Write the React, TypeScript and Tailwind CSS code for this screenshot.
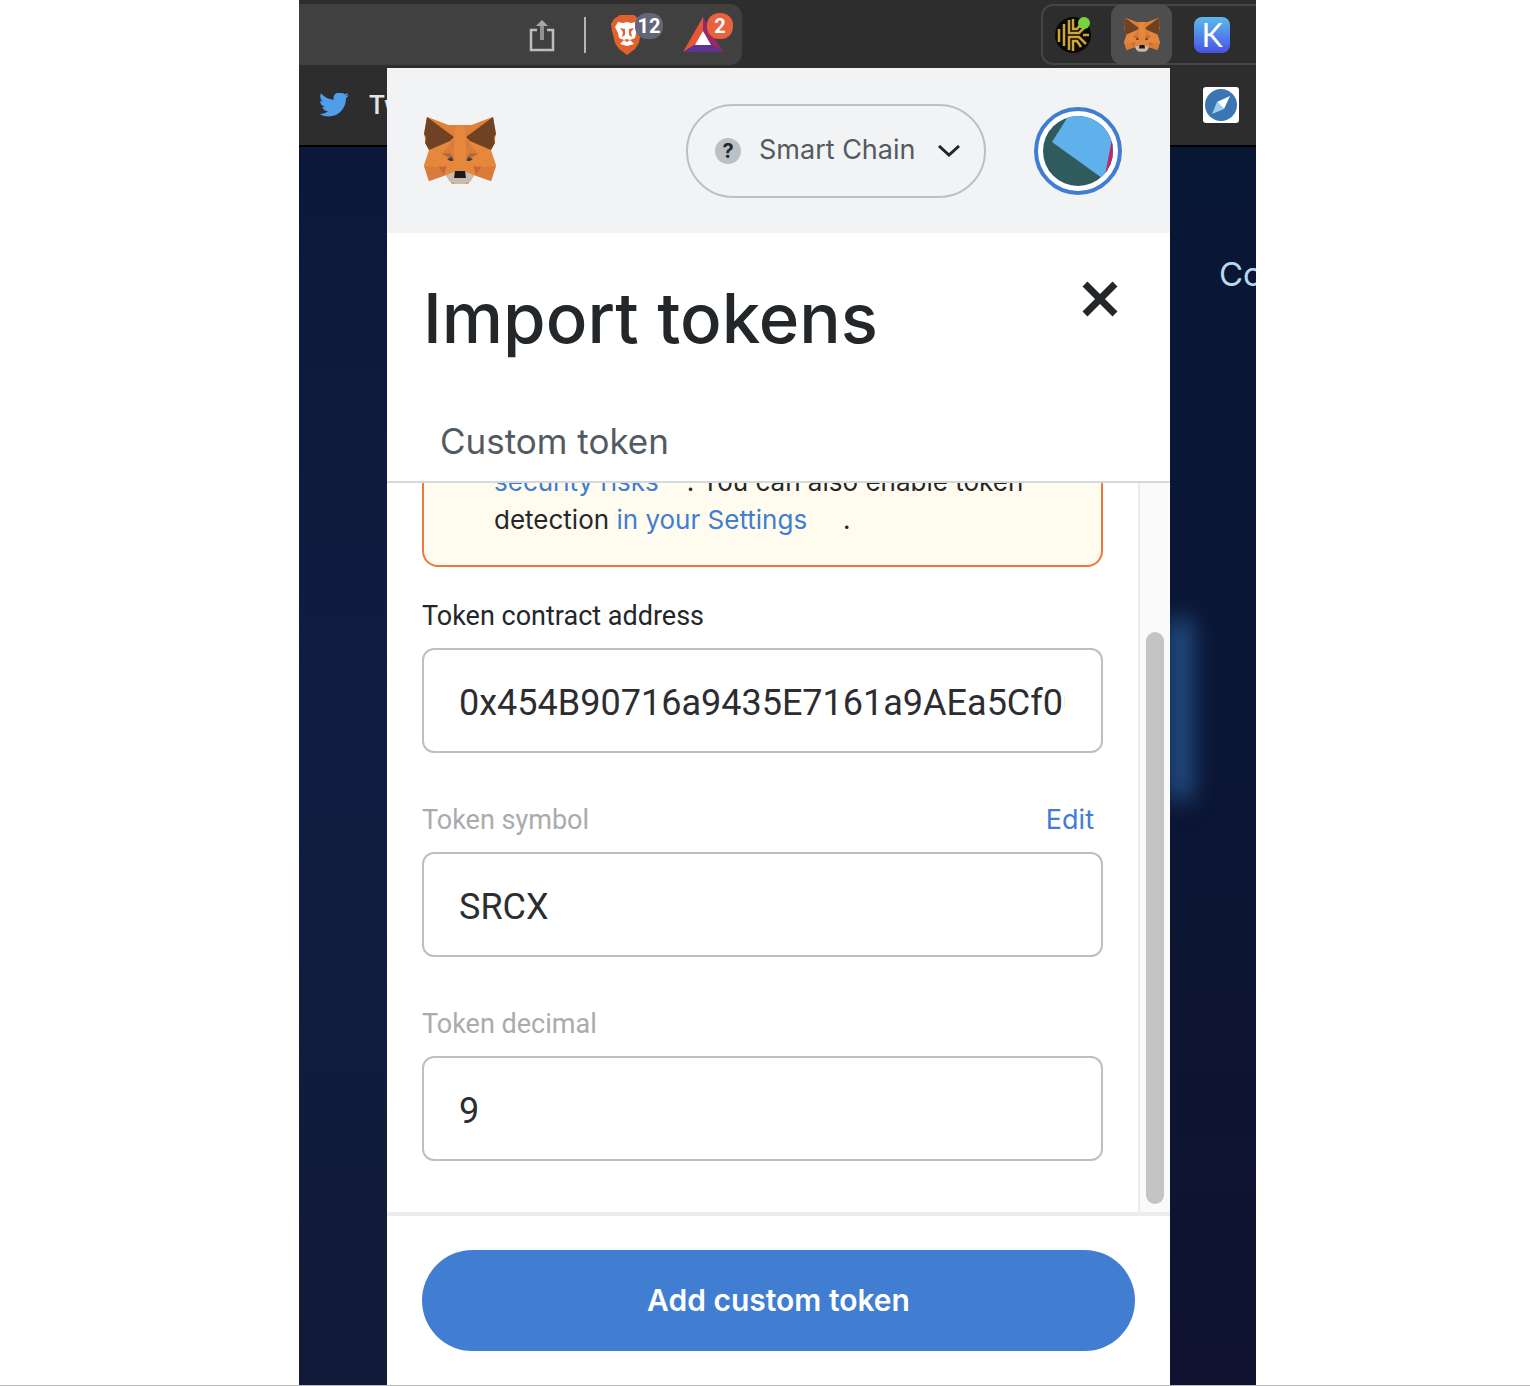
import { ChangeEvent, ReactNode, useState } from "react";

const FoxLogo = ({ className }: { className?: string }) => (
    <svg viewBox="0 0 72 68" className={className} aria-hidden="true">
        <path d="M3 0 24 8H48L69 0 72 17 70 26 67 33 72 48 67 64 50 58 44 67H28L22 58 5 64 0 48 5 33 2 26 0 17Z" fill="#e6883b" />
        <path d="M3 0 24 8 36 8 30 20ZM69 0 48 8 36 8 42 20Z" fill="#e07f38" />
        <path d="M31 8H41V54H31Z" fill="#e6883b" />
        <path d="M30 21V42L17 37 24 30ZM42 21V42L55 37 48 30Z" fill="#d97c3a" />
        <path d="M18 37 26 36 31 44 27 42ZM54 37 46 36 41 44 45 42Z" fill="#bd6437" />
        <path d="M3 0 30 20 26 24 5 33 1 26 2 20 0 17Z" fill="#6f4223" />
        <path d="M69 0 42 20 46 24 67 33 71 26 70 20 72 17Z" fill="#6f4223" />
        <path d="M0 49 14 50 22 58 5 64ZM72 49 58 50 50 58 67 64Z" fill="#d97c3a" />
        <path d="M14 50 23 49 20 57ZM58 50 49 49 52 57Z" fill="#c6683a" />
        <path d="M22 58 30 55H42L50 58 47 64 41 67H31L25 64Z" fill="#c9bbb0" />
        <path d="M31 54H41L42 61H30Z" fill="#1b1b1b" />
        <path d="M23 42 28 40 29 44 26 44ZM49 42 44 40 43 44 46 44Z" fill="#3a3e44" />
    </svg>
)

const ShareIcon = () => (
    <svg viewBox="0 0 26 34" className="h-[34px] w-[26px]" fill="none" strokeWidth="2.5" aria-hidden="true">
        <path d="M8 12H2V32H24V12H18" stroke="#bdbdbd" />
        <path d="M13 22V6" stroke="#919191" strokeWidth="4" />
        <path d="M7 8 13 2 19 8Z" fill="#a8a8a8" />
    </svg>
)

const BraveIcon = () => (
    <svg viewBox="0 0 32 40" className="h-10 w-8" aria-hidden="true">
        <path d="M9 0H23L28 4 32 9 30 16 28 28 24 34 16 40 8 34 4 28 1 16 0 9 3 4Z" fill="#e2602b" />
        <path d="M7 7 12 8 16 7 20 8 25 7 28 12 25 18 24 23 19 25 23 29 16 31 9 29 13 25 8 23 7 18 4 12Z" fill="#fff" />
        <path d="M9 13 14 14V20L11 22 12 17ZM23 13 18 14V20L21 22 20 17ZM13 25 16 27 19 25 16 24Z" fill="#e2602b" />
    </svg>
)

const RewardsIcon = () => (
    <svg viewBox="0 0 40 35" className="h-[35px] w-10" aria-hidden="true">
        <path d="M20 0 0 35 13 27 20 14Z" fill="#e8563a" />
        <path d="M20 0 40 35 27 27 20 14Z" fill="#962a68" />
        <path d="M0 35H40L27 27H13Z" fill="#5e3290" />
        <path d="M20 14 12 28H28Z" fill="#fff" />
    </svg>
)

const CircuitIcon = () => (
    <svg viewBox="0 0 36 36" className="h-9 w-9" fill="none" stroke="#cfa53a" strokeWidth="2.5" aria-hidden="true">
        <circle cx="18" cy="18" r="18" fill="#0b0a06" stroke="none" />
        <path d="M4 12V25M9 7V29M14 3V16H24L31 9M14 33V20H24L31 27M18 2V12H22L26 7M18 34V24H22L26 30M28 18H34" />
        <circle cx="29" cy="6" r="6" fill="#76d33f" stroke="none" />
    </svg>
)

const TwitterIcon = () => (
    <svg viewBox="0 3 24 19" className="h-6 w-[30px] shrink-0" fill="#4f9eea" aria-hidden="true">
        <path d="M23.95 4.57a10 10 0 0 1-2.82.77 4.96 4.96 0 0 0 2.16-2.72c-.95.55-2 .96-3.13 1.18a4.92 4.92 0 0 0-8.38 4.48C7.69 8.09 4.07 6.13 1.64 3.16a4.82 4.82 0 0 0-.67 2.48c0 1.7.87 3.21 2.19 4.1a4.9 4.9 0 0 1-2.23-.62v.06a4.92 4.92 0 0 0 3.95 4.83 5 5 0 0 1-2.21.08 4.94 4.94 0 0 0 4.6 3.42A9.87 9.87 0 0 1 0 19.54a13.99 13.99 0 0 0 7.56 2.21c9.05 0 14-7.5 14-13.99 0-.21 0-.42-.02-.63a9.94 9.94 0 0 0 2.46-2.55z" />
    </svg>
)

const CompassIcon = () => (
    <svg viewBox="0 0 36 36" className="h-9 w-9" aria-hidden="true">
        <rect width="36" height="36" rx="3" fill="#fff" />
        <circle cx="18" cy="18" r="16" fill="#3b76b4" />
        <path d="M27 9 14 15 21 22Z" fill="#fff" />
        <path d="M9 27 14 15 21 22Z" fill="#9fd0ea" />
    </svg>
)

const AccountAvatar = () => (
    <svg viewBox="0 0 88 88" className="h-[88px] w-[88px]" aria-hidden="true">
        <defs>
            <clipPath id="avatar-clip"><circle cx="44" cy="44" r="35" /></clipPath>
        </defs>
        <circle cx="44" cy="44" r="42" fill="#fff" stroke="#417dd0" strokeWidth="4" />
        <g clipPath="url(#avatar-clip)">
            <path d="M0 0H88V88H0Z" fill="#2f5b5e" />
            <path d="M40 0 18 35 68 71 88 71V0Z" fill="#5fb1ec" />
            <path d="M78 32 71 68 88 80V32Z" fill="#bb2a62" />
        </g>
    </svg>
)

type FieldProps = {
    id: string
    label: string
    value: string
    muted?: boolean
    action?: ReactNode
    onChange: (value: string) => void
}

const Field = ({ id, label, value, muted, action, onChange }: FieldProps) => (
    <div className="flex flex-col">
        <div className="flex h-8 items-center justify-between pr-[9px]">
            <label htmlFor={id} className={muted ? "text-[27px] leading-8 text-[#a9abae]" : "text-[27px] leading-8 text-[#24272a]"}>
                {label}
            </label>
            {action}
        </div>
        <input
            type="text"
            id={id}
            name={id}
            value={value}
            onChange={(event: ChangeEvent<HTMLInputElement>) => onChange(event.target.value)}
            className="mt-4 h-[105px] w-full rounded-xl border-2 border-[#bbc0c5] bg-white pt-1 pr-9 pl-[35px] text-[36px] text-[#2b2d30] outline-none focus:border-[#417dd0]"
        />
    </div>
)

const BrowserWindow = () => (
    <div className="col-start-1 row-start-1 flex min-w-0 flex-col overflow-hidden">
        <div className="flex h-[68px] justify-between bg-[#2d2d2d] pt-1 pb-[3px]">
            <div className="flex w-[443px] items-center justify-end rounded-r-xl bg-[#404040] pr-2">
                <button type="button" aria-label="Share"><ShareIcon /></button>
                <div className="mr-[25px] ml-[29px] h-9 w-[2px] bg-[#b5b5b5]" />
                <button type="button" aria-label="Brave Shields" className="relative mr-[40px] w-8">
                    <BraveIcon />
                    <span className="absolute -top-[2px] left-6 flex h-[26px] w-7 items-center justify-center rounded-xl bg-[#636679] text-[20px] font-bold text-white">12</span>
                </button>
                <button type="button" aria-label="Brave Rewards" className="relative mr-[11px] w-10">
                    <RewardsIcon />
                    <span className="absolute -top-1 left-6 flex h-[26px] w-[26px] items-center justify-center rounded-xl bg-[#e9613d] text-[20px] font-bold text-white">2</span>
                </button>
            </div>
            <div className="flex w-[215px] items-center rounded-l-xl border-2 border-r-0 border-[#454545] pl-3">
                <button type="button" aria-label="Extension"><CircuitIcon /></button>
                <button type="button" aria-label="MetaMask" className="mr-[22px] ml-5 flex h-[61px] w-[61px] items-center justify-center rounded-xl bg-[#4e4e4e]">
                    <FoxLogo className="h-[34px] w-9" />
                </button>
                <button type="button" aria-label="Keplr" className="flex h-9 w-9 items-center justify-center rounded-lg bg-linear-to-b from-[#5cb8ea] to-[#4a4fe6] font-[Lato] text-[32px] leading-9 text-white">
                    K
                </button>
            </div>
        </div>
        <div className="flex h-[79px] items-center justify-between border-b-2 border-black bg-[#2d2d2d] pr-[17px] pb-[3px] pl-5">
            <a href="#twitter" className="flex items-center gap-5 text-[26px] font-medium text-[#e4e4e4]">
                <TwitterIcon />
                Twitter
            </a>
            <a href="#compass" aria-label="Compass"><CompassIcon /></a>
        </div>
        <div className="flex flex-1 flex-col items-end bg-linear-to-b from-[#0c183b] via-[#111c42] to-[#111a38]">
            <div className="w-[86px] flex-1 overflow-hidden bg-linear-to-b from-[#081734] via-[#0b1634] to-[#0f132f]">
                <a href="#connect" className="mt-[107px] ml-[49px] block w-[37px] overflow-hidden font-[Inter] text-[33px] leading-10 text-[#b9d7ee]">Connect</a>
                <div className="mt-[325px] h-[180px] w-5 bg-[#2a5f9c] blur-[12px]" />
            </div>
        </div>
    </div>
)

const App = () => {

    const [address, setAddress] = useState<string>("0x454B90716a9435E7161a9AEa5Cf0049bA12c3fD8");
    const [symbol, setSymbol] = useState<string>("SRCX");
    const [decimal, setDecimal] = useState<string>("9");

    return (
        <div className="min-h-screen border-b border-[#bbbbbb] bg-white font-[Roboto,sans-serif]">
            <div className="mr-[274px] ml-[299px] grid min-h-[calc(100vh-1px)] grid-cols-1">
                <BrowserWindow />

                <main className="relative col-start-1 row-start-1 mt-[68px] mr-[86px] ml-[88px] flex flex-col bg-white font-[Inter,sans-serif]">
                    <header className="flex h-[165px] items-center justify-between bg-[#f2f3f5] pr-12 pl-[37px]">
                        <FoxLogo className="h-[68px] w-[72px]" />
                        <div className="flex items-center gap-12">
                            <button type="button" className="flex h-[94px] w-[300px] items-center rounded-full border-2 border-[#bbc0c5] pl-[27px] text-[27px] text-[#535a61]">
                                <span className="mr-[18px] flex h-[26px] w-[26px] items-center justify-center rounded-full bg-[#bbc0c5] text-[20px] font-bold text-[#24272a]">?</span>
                                Smart Chain
                                <svg viewBox="0 0 22 12" className="ml-[22px] h-3 w-[22px]" fill="none" stroke="#24272a" strokeWidth="3" aria-hidden="true">
                                    <path d="M1 1 11 10 21 1" />
                                </svg>
                            </button>
                            <button type="button" aria-label="Account"><AccountAvatar /></button>
                        </div>
                    </header>

                    <div className="flex items-start justify-between pt-10 pr-[52px] pl-9">
                        <h1 className="text-[69px] leading-[90px] font-medium text-[#24272a]">Import tokens</h1>
                        <button type="button" aria-label="Close" className="mt-2">
                            <svg viewBox="0 0 36 36" className="h-9 w-9" fill="none" stroke="#24272a" strokeWidth="7" aria-hidden="true">
                                <path d="M3 3 33 33M33 3 3 33" />
                            </svg>
                        </button>
                    </div>

                    <div className="mt-[38px] flex h-[82px] border-b-2 border-[#d6d9dc] px-[53px]">
                        <button type="button" className="text-[35px] text-[#535a61]">Custom token</button>
                    </div>

                    <div className="flex border-b-4 border-[#ebecee]">
                        <div className="flex min-w-0 flex-1 flex-col px-[35px] pb-[51px]">
                            <div className="flex h-[84px] flex-col justify-end overflow-hidden rounded-b-2xl border-2 border-t-0 border-[#e8793f] bg-[#fffcef] pr-12 pb-[26px] pl-[70px] text-[26px] leading-[38px] text-[#24272a]">
                                <p>
                                    <a href="#risks" className="mr-7 text-[#417dd0]">security risks</a>. You can also enable token
                                </p>
                                <p>
                                    detection <a href="#settings" className="mr-9 text-[#417dd0]">in your Settings</a>.
                                </p>
                            </div>
                            <form name="custom-token" id="custom-token" className="mt-[33px] flex flex-col gap-[51px] font-[Roboto,sans-serif]">
                                <Field id="address" label="Token contract address" value={address} onChange={setAddress} />
                                <Field
                                    id="symbol"
                                    label="Token symbol"
                                    value={symbol}
                                    muted
                                    onChange={setSymbol}
                                    action={<button type="button" className="font-[Inter] text-[27px] leading-8 text-[#417dd0]">Edit</button>}
                                />
                                <Field id="decimal" label="Token decimal" value={decimal} muted onChange={setDecimal} />
                            </form>
                        </div>
                        <div className="flex w-8 flex-col items-center border-l-2 border-[#ebebeb] bg-[#fafafa] pt-[149px] pb-2">
                            <div className="w-[18px] flex-1 rounded-full bg-[#c4c4c4]" />
                        </div>
                    </div>

                    <footer className="flex px-[35px] pt-[34px] pb-8">
                        <button type="button" className="h-[101px] flex-1 rounded-full bg-[#417dd0] text-[30px] font-semibold text-white">
                            Add custom token
                        </button>
                    </footer>
                </main>
            </div>
        </div>
    )
}

export default App;
